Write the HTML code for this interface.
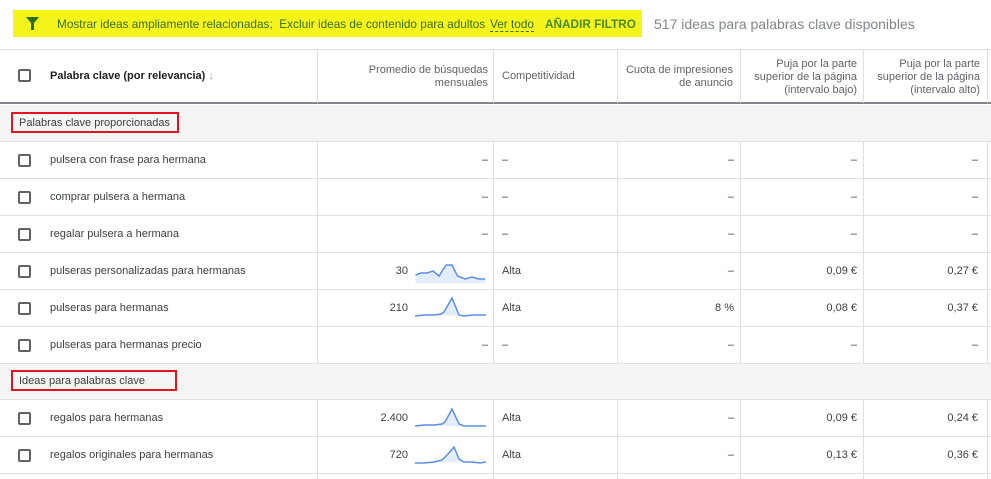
<!DOCTYPE html><html><head><meta charset="utf-8"><style>
*{margin:0;padding:0;box-sizing:border-box}
body{width:991px;height:479px;overflow:hidden;background:#fff;font-family:"Liberation Sans",Arial,sans-serif;position:relative;color:#3c4043}
.a{position:absolute}
.yb{left:13px;top:10px;width:629px;height:27px;background:#f5f51c;font-size:11.8px;color:#3a6d1f}
.hd{font-size:11px;color:#5f6368;text-align:right;line-height:13px}
.row{position:absolute;left:0;width:991px;height:37px;border-bottom:1px solid #e0e0e0;font-size:11px;color:#3c4043}
.sec{background:#f4f4f4}
.cb{position:absolute;left:18px;top:12px;width:13px;height:13px;border:2px solid #5f6368;border-radius:2px}
.vl{position:absolute;top:0;width:1px;background:#e0e0e0}
.c{position:absolute;top:12px}
.r{text-align:right}
</style></head><body>
<div class="a yb">
<svg class="a" style="left:13px;top:7px" width="13" height="13" viewBox="0 0 13 13"><path d="M0 0H13L8 6V13H5V6Z" fill="#2d6e1e"/></svg>
<span class="a" style="left:44px;top:7px;white-space:nowrap">Mostrar ideas ampliamente relacionadas;&nbsp; Excluir ideas de contenido para adultos</span>
<span class="a" style="left:477px;top:7px;border-bottom:1px dashed #3a6d1f">Ver todo</span>
<span class="a" style="left:532px;top:7px;font-weight:bold;color:#4b8a2a">AÑADIR FILTRO</span>
</div>
<div class="a" style="left:654px;top:16px;font-size:14px;color:#80868b">517 ideas para palabras clave disponibles</div>
<div class="a" style="left:0;top:49px;width:991px;height:55px;border-top:1px solid #e0e0e0;border-bottom:2px solid #80868b"></div>
<div class="cb" style="top:69px"></div>
<div class="a" style="left:50px;top:70px;font-size:11px;font-weight:bold;color:#202124">Palabra clave (por relevancia) <span style="color:#9aa0a6;font-weight:normal">↓</span></div>
<div class="a hd" style="left:330px;top:64px;width:158px">Promedio de búsquedas<br>mensuales</div>
<div class="a hd" style="left:502px;top:70px;text-align:left">Competitividad</div>
<div class="a hd" style="left:620px;top:64px;width:113px">Cuota de impresiones<br>de anuncio</div>
<div class="a hd" style="left:744px;top:58px;width:113px">Puja por la parte<br>superior de la página<br>(intervalo bajo)</div>
<div class="a hd" style="left:867px;top:58px;width:113px">Puja por la parte<br>superior de la página<br>(intervalo alto)</div>
<div class="vl" style="left:317px;top:49px;height:54px"></div>
<div class="vl" style="left:493px;top:49px;height:54px"></div>
<div class="vl" style="left:617px;top:49px;height:54px"></div>
<div class="vl" style="left:740px;top:49px;height:54px"></div>
<div class="vl" style="left:863px;top:49px;height:54px"></div>
<div class="vl" style="left:987px;top:49px;height:54px"></div>

<div class="row sec" style="top:105px;height:37px"><div class="a" style="left:11px;top:7px;width:168px;height:21px;border:2px solid #e0141c;padding:3px 0 0 6px">Palabras clave proporcionadas</div></div>

<div class="row" style="top:142px"><div class="cb"></div><div class="c" style="left:50px">pulsera con frase para hermana</div><div class="c r" style="left:440px;width:48px">–</div><div class="c" style="left:502px">–</div><div class="c r" style="left:700px;width:34px">–</div><div class="c r" style="left:800px;width:57px">–</div><div class="c r" style="left:920px;width:58px">–</div></div>
<div class="row" style="top:179px"><div class="cb"></div><div class="c" style="left:50px">comprar pulsera a hermana</div><div class="c r" style="left:440px;width:48px">–</div><div class="c" style="left:502px">–</div><div class="c r" style="left:700px;width:34px">–</div><div class="c r" style="left:800px;width:57px">–</div><div class="c r" style="left:920px;width:58px">–</div></div>
<div class="row" style="top:216px"><div class="cb"></div><div class="c" style="left:50px">regalar pulsera a hermana</div><div class="c r" style="left:440px;width:48px">–</div><div class="c" style="left:502px">–</div><div class="c r" style="left:700px;width:34px">–</div><div class="c r" style="left:800px;width:57px">–</div><div class="c r" style="left:920px;width:58px">–</div></div>
<div class="row" style="top:253px"><div class="cb"></div><div class="c" style="left:50px">pulseras personalizadas para hermanas</div><div class="c r" style="left:360px;width:48px">30</div>
<svg class="a" style="left:414px;top:8px" width="73" height="22"><path d="M1.5 14 7 12 13 12 19 10 25 15 32 4 38 4 43.5 15 51 18 58 16 65 18 71 18 V22 H1.5Z" fill="#e3edfb"/><path d="M1.5 14 7 12 13 12 19 10 25 15 32 4 38 4 43.5 15 51 18 58 16 65 18 71 18" fill="none" stroke="#5b8fe8" stroke-width="1.5"/></svg>
<div class="c" style="left:502px">Alta</div><div class="c r" style="left:700px;width:34px">–</div><div class="c r" style="left:800px;width:57px">0,09 €</div><div class="c r" style="left:920px;width:58px">0,27 €</div></div>
<div class="row" style="top:290px"><div class="cb"></div><div class="c" style="left:50px">pulseras para hermanas</div><div class="c r" style="left:360px;width:48px">210</div>
<svg class="a" style="left:414px;top:6px" width="73" height="24"><path d="M1 20 10 19 20 19 27 18 30 16 38 2 45 19 50 20 58 19 72 19" fill="#e3edfb" stroke="#5b8fe8" stroke-width="1.5"/></svg>
<div class="c" style="left:502px">Alta</div><div class="c r" style="left:700px;width:34px">8 %</div><div class="c r" style="left:800px;width:57px">0,08 €</div><div class="c r" style="left:920px;width:58px">0,37 €</div></div>
<div class="row" style="top:327px"><div class="cb"></div><div class="c" style="left:50px">pulseras para hermanas precio</div><div class="c r" style="left:440px;width:48px">–</div><div class="c" style="left:502px">–</div><div class="c r" style="left:700px;width:34px">–</div><div class="c r" style="left:800px;width:57px">–</div><div class="c r" style="left:920px;width:58px">–</div></div>

<div class="row sec" style="top:364px;height:36px"><div class="a" style="left:11px;top:6px;width:166px;height:21px;border:2px solid #e0141c;padding:3px 0 0 6px">Ideas para palabras clave</div></div>

<div class="row" style="top:400px"><div class="cb"></div><div class="c" style="left:50px">regalos para hermanas</div><div class="c r" style="left:360px;width:48px">2.400</div>
<svg class="a" style="left:414px;top:6px" width="73" height="24"><path d="M1 20 10 19 20 19 28 18 31 16 38 3 45 18 50 20 58 20 72 20" fill="#e3edfb" stroke="#5b8fe8" stroke-width="1.5"/></svg>
<div class="c" style="left:502px">Alta</div><div class="c r" style="left:700px;width:34px">–</div><div class="c r" style="left:800px;width:57px">0,09 €</div><div class="c r" style="left:920px;width:58px">0,24 €</div></div>
<div class="row" style="top:437px"><div class="cb"></div><div class="c" style="left:50px">regalos originales para hermanas</div><div class="c r" style="left:360px;width:48px">720</div>
<svg class="a" style="left:414px;top:6px" width="73" height="24"><path d="M1 20 10 20 20 19 28 17 34 11 40 4 45 16 50 19 58 19 66 20 72 19" fill="#e3edfb" stroke="#5b8fe8" stroke-width="1.5"/></svg>
<div class="c" style="left:502px">Alta</div><div class="c r" style="left:700px;width:34px">–</div><div class="c r" style="left:800px;width:57px">0,13 €</div><div class="c r" style="left:920px;width:58px">0,36 €</div></div>

<div class="vl" style="left:317px;top:142px;height:222px"></div>
<div class="vl" style="left:493px;top:142px;height:222px"></div>
<div class="vl" style="left:617px;top:142px;height:222px"></div>
<div class="vl" style="left:740px;top:142px;height:222px"></div>
<div class="vl" style="left:863px;top:142px;height:222px"></div>
<div class="vl" style="left:987px;top:142px;height:222px"></div>
<div class="vl" style="left:317px;top:400px;height:79px"></div>
<div class="vl" style="left:493px;top:400px;height:79px"></div>
<div class="vl" style="left:617px;top:400px;height:79px"></div>
<div class="vl" style="left:740px;top:400px;height:79px"></div>
<div class="vl" style="left:863px;top:400px;height:79px"></div>
<div class="vl" style="left:987px;top:400px;height:79px"></div>
</body></html>
